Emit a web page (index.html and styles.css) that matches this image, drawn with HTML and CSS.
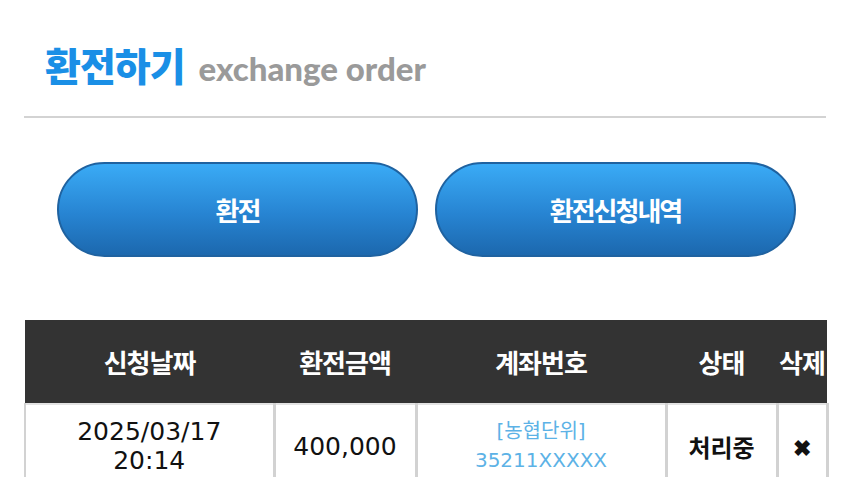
FILE: index.html
```html
<!DOCTYPE html>
<html lang="ko">
<head>
    <meta charset="UTF-8">
    <meta name="viewport" content="width=device-width, initial-scale=1.0">
    <title>환전하기</title>
    <link rel="stylesheet" href="styles.css">
</head>
<body>
    <div class="wrap">
        <div class="title">
            <h1>환전하기</h1>
            <span class="sub">exchange order</span>
        </div>
        <div class="tabs">
            <a href="#" class="tab-btn">환전</a>
            <a href="#" class="tab-btn">환전신청내역</a>
        </div>
        <table class="history">
            <colgroup>
                <col class="c-date">
                <col class="c-amount">
                <col class="c-account">
                <col class="c-state">
                <col class="c-del">
            </colgroup>
            <thead>
                <tr>
                    <th>신청날짜</th>
                    <th>환전금액</th>
                    <th>계좌번호</th>
                    <th>상태</th>
                    <th>삭제</th>
                </tr>
            </thead>
            <tbody>
                <tr>
                    <td class="num">2025/03/17<br>20:14</td>
                    <td class="num">400,000</td>
                    <td class="account">[농협단위]<br>35211XXXXX</td>
                    <td class="state">처리중</td>
                    <td class="del">&#10006;</td>
                </tr>
            </tbody>
        </table>
    </div>
</body>
</html>
```

FILE: styles.css
```css
body {
    margin: 0;
    padding: 0;
    background-color: #fff;
    font-family: "Noto Sans CJK KR", "Noto Sans", sans-serif;
}
.wrap {
    padding: 0 24px;
}
.title {
    display: flex;
    align-items: baseline;
    gap: 14px;
    padding: 36px 21px 24px;
    border-bottom: 2px solid #d3d3d3;
}
.title h1 {
    margin: 0;
    font-size: 39px;
    font-weight: 900;
    line-height: 56px;
    color: #1a8fe6;
    letter-spacing: -1px;
}
.sub {
    font-family: "Lato", sans-serif;
    font-weight: 900;
    font-size: 33px;
    color: #9a9a9a;
}
.tabs {
    display: flex;
    gap: 17px;
    padding: 44px 30px 0 33px;
}
.tab-btn {
    flex: 1;
    height: 91px;
    display: flex;
    align-items: center;
    justify-content: center;
    border: 2px solid #1f62a0;
    border-radius: 48px;
    background: linear-gradient(to bottom, #3aabf6, #2784d2 55%, #1c68ae);
    color: #fff;
    text-decoration: none;
    font-size: 26px;
    font-weight: 700;
    letter-spacing: -2px;
}
.history {
    width: 802px;
    margin-top: 63px;
    border-collapse: collapse;
    table-layout: fixed;
}
.c-date { width: 249px; }
.c-amount { width: 142px; }
.c-account { width: 250px; }
.c-state { width: 111px; }
.c-del { width: 50px; }
.history th {
    height: 83px;
    padding: 0;
    background-color: #333;
    color: #fff;
    font-size: 26px;
    font-weight: 700;
    letter-spacing: -1px;
    white-space: nowrap;
    text-align: center;
}
.history td {
    border: 3px solid #d2d2d2;
    border-top: 2px solid #e3e3e3;
    padding: 12px 0 20px;
    text-align: center;
    line-height: 29px;
    color: #111;
}
.history td:first-child {
    border-left-width: 2px;
}
.num {
    font-family: "DejaVu Sans", sans-serif;
    font-size: 25px;
}
.account {
    font-family: "DejaVu Sans", "Noto Sans CJK KR", sans-serif;
    font-size: 20px;
    color: #5cb2e6 !important;
}
.state {
    font-size: 24px;
    font-weight: 700;
}
.del {
    font-size: 22px;
    font-weight: 700;
}
```
